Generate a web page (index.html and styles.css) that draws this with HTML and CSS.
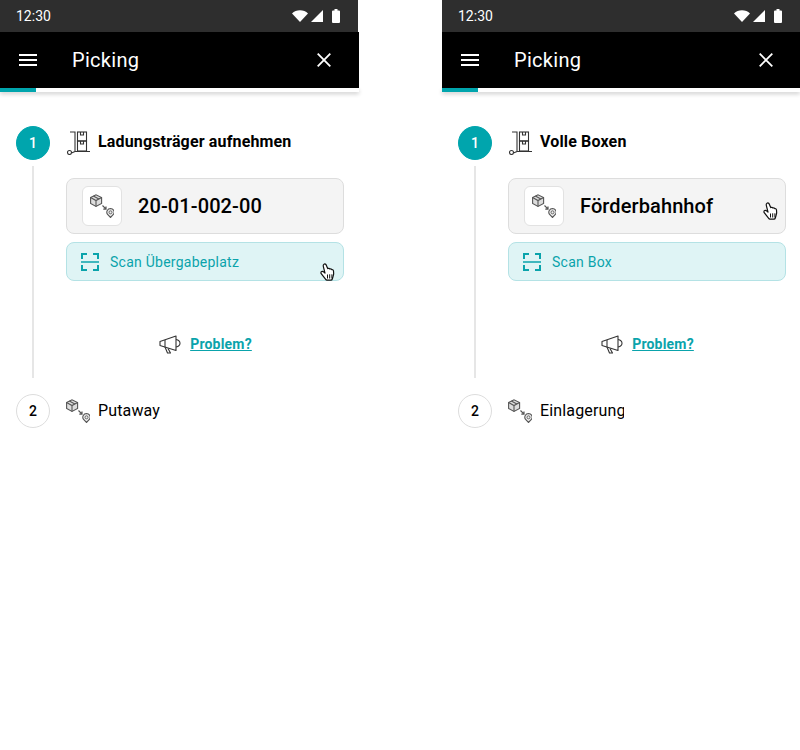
FILE: index.html
```html
<!DOCTYPE html>
<html lang="de">
<head>
    <meta charset="UTF-8">
    <meta name="viewport" content="width=device-width, initial-scale=1.0">
    <title>Picking</title>
    <link rel="stylesheet" href="styles.css">
</head>
<body>
    <svg class="sprites" width="0" height="0">
        <symbol id="i-route" viewBox="0 0 24 24">
            <g stroke="#555" stroke-width="1.100">
                <path d="M.6 3.500 6 .8 11.600 3.500V9.500L6 12.400.6 9.500Z" fill="#ddd"/>
                <path d="M.6 3.500 6 6.500 11.600 3.500M6 6.500V12.400M3.300 2.100 8.900 5" fill="none"/>
                <path d="M12.500 11.500 15.800 14.800M13.300 15.200H16V12.500" fill="none" stroke-width="1.200"/>
                <path d="M20.500 14.500a3.700 3.700 0 0 1 3.100 5.700L20.500 23.500 17.400 20.200A3.700 3.700 0 0 1 20.500 14.500Z" fill="#eee"/>
                <circle cx="20.500" cy="18.300" r="1.500" fill="none" stroke="#666" stroke-width="1"/>
            </g>
        </symbol>
        <symbol id="i-cursor" viewBox="0 0 16 20">
            <path d="M4 1.200c1-.6 1.900 0 2.300 1l1.400 3.400c.8-.5 1.600-.3 2 .4.8-.4 1.600-.2 2 .6.900-.2 1.600.3 1.800 1.200.3 1.700.2 3.800-.4 5.500l-.8 2.700c-.2.700-.7 1.100-1.400 1.100H7c-.6 0-1-.2-1.300-.7L1.200 10.700c-.5-.8-.3-1.700.4-2.100.8-.5 1.600-.2 2.300.5l1.100 1.100L3.300 3.300C3 2.400 3.300 1.600 4 1.200Z" fill="#fff" stroke="#111" stroke-width="1.200" stroke-linejoin="round"/>
            <path d="M7.500 11.500v4M9.700 11.300v4.200M11.900 11.300v4.200" stroke="#111" stroke-width="1" fill="none"/>
        </symbol>
        <symbol id="i-trolley" viewBox="0 0 24 24">
            <g fill="none" stroke="#333" stroke-width="1.100">
                <path d="M4 1H9V20.500H24M9 20.500 5.500 22"/>
                <rect x="11.500" y="1" width="9" height="9"/>
                <rect x="11.500" y="10" width="9" height="10"/>
                <path d="M14.500 1V4H17.500V1M14.500 10V13H17.500V10"/>
                <circle cx="3.500" cy="21.500" r="2"/>
            </g>
        </symbol>
        <symbol id="i-horn" viewBox="0 0 22 20">
            <g fill="none" stroke="#333" stroke-width="1.100" stroke-linejoin="round">
                <path d="M1 7.500 17 2V16.500L1 11.500Z"/>
                <path d="M6 6V13L8.500 19H11.500L9 14.500"/>
                <path d="M17 5.500C19.500 6 21 7.500 21 9.300S19.500 12.600 17 13"/>
            </g>
        </symbol>
    </svg>

    <div class="screens">
        <section class="phone">
            <div class="status-bar">
                <span>12:30</span>
                <span class="status-icons">
                    <svg width="16" height="12" viewBox="0 0 16 12"><path d="M0 3.500C4-.7 12-.7 16 3.500L8 12Z" fill="#fff"/></svg>
                    <svg width="12" height="12" viewBox="0 0 12 12"><path d="M0 12 12 0V12Z" fill="#fff"/></svg>
                    <svg class="battery" width="8" height="14" viewBox="0 0 8 14"><path d="M2.500 0H5.500V1.500H7a1 1 0 0 1 1 1V13a1 1 0 0 1-1 1H1a1 1 0 0 1-1-1V2.500a1 1 0 0 1 1-1H2.500Z" fill="#fff"/></svg>
                </span>
            </div>
            <header class="app-bar">
                <svg class="bar-icon" width="18" height="12" viewBox="0 0 18 12"><path d="M0 1H18M0 6H18M0 11H18" stroke="#fff" stroke-width="2"/></svg>
                <h1>Picking</h1>
                <svg class="close-icon" width="14" height="14" viewBox="0 0 14 14"><path d="M.7.7 13.300 13.300M13.300.7.7 13.300" stroke="#fff" stroke-width="1.800"/></svg>
            </header>
            <div class="progress"><div class="progress-fill"></div></div>

            <div class="steps">
                <div class="step-head">
                    <div class="step-num active">1</div>
                    <svg class="step-icon"><use href="#i-trolley"/></svg>
                    <strong class="step-title">Ladungsträger aufnehmen</strong>
                </div>
                <div class="step-body">
                    <div class="target">
                        <div class="target-icon"><svg width="24" height="24"><use href="#i-route"/></svg></div>
                        <span class="target-label">20-01-002-00</span>
                    </div>
                    <div class="scan">
                        <svg width="18" height="18" viewBox="0 0 18 18"><path d="M1 6V1H6M12 1H17V6M1 12V17H6M12 17H17V12" fill="none" stroke="#0aa3ab" stroke-width="2"/><path d="M0 9H18" stroke="#0aa3ab" stroke-width="1.500"/></svg>
                        <span>Scan Übergabeplatz</span>
                        <svg class="cursor cursor-scan"><use href="#i-cursor"/></svg>
                    </div>
                    <div class="problem">
                        <svg class="horn"><use href="#i-horn"/></svg>
                        <a href="#">Problem?</a>
                    </div>
                </div>
                <div class="step-head">
                    <div class="step-num">2</div>
                    <svg class="step-icon"><use href="#i-route"/></svg>
                    <span class="step-title">Putaway</span>
                </div>
            </div>
        </section>

        <section class="phone">
            <div class="status-bar">
                <span>12:30</span>
                <span class="status-icons">
                    <svg width="16" height="12" viewBox="0 0 16 12"><path d="M0 3.500C4-.7 12-.7 16 3.500L8 12Z" fill="#fff"/></svg>
                    <svg width="12" height="12" viewBox="0 0 12 12"><path d="M0 12 12 0V12Z" fill="#fff"/></svg>
                    <svg class="battery" width="8" height="14" viewBox="0 0 8 14"><path d="M2.500 0H5.500V1.500H7a1 1 0 0 1 1 1V13a1 1 0 0 1-1 1H1a1 1 0 0 1-1-1V2.500a1 1 0 0 1 1-1H2.500Z" fill="#fff"/></svg>
                </span>
            </div>
            <header class="app-bar">
                <svg class="bar-icon" width="18" height="12" viewBox="0 0 18 12"><path d="M0 1H18M0 6H18M0 11H18" stroke="#fff" stroke-width="2"/></svg>
                <h1>Picking</h1>
                <svg class="close-icon" width="14" height="14" viewBox="0 0 14 14"><path d="M.7.7 13.300 13.300M13.300.7.7 13.300" stroke="#fff" stroke-width="1.800"/></svg>
            </header>
            <div class="progress"><div class="progress-fill"></div></div>

            <div class="steps">
                <div class="step-head">
                    <div class="step-num active">1</div>
                    <svg class="step-icon"><use href="#i-trolley"/></svg>
                    <strong class="step-title">Volle Boxen</strong>
                </div>
                <div class="step-body">
                    <div class="target">
                        <div class="target-icon"><svg width="24" height="24"><use href="#i-route"/></svg></div>
                        <span class="target-label">Förderbahnhof</span>
                        <svg class="cursor cursor-target"><use href="#i-cursor"/></svg>
                    </div>
                    <div class="scan">
                        <svg width="18" height="18" viewBox="0 0 18 18"><path d="M1 6V1H6M12 1H17V6M1 12V17H6M12 17H17V12" fill="none" stroke="#0aa3ab" stroke-width="2"/><path d="M0 9H18" stroke="#0aa3ab" stroke-width="1.500"/></svg>
                        <span>Scan Box</span>
                    </div>
                    <div class="problem">
                        <svg class="horn"><use href="#i-horn"/></svg>
                        <a href="#">Problem?</a>
                    </div>
                </div>
                <div class="step-head">
                    <div class="step-num">2</div>
                    <svg class="step-icon"><use href="#i-route"/></svg>
                    <span class="step-title clipped">Einlagerung</span>
                </div>
            </div>
        </section>
    </div>
</body>
</html>
```

FILE: styles.css
```css
body {
    margin: 0;
    background-color: #fff;
    font-family: Roboto, "Liberation Sans", sans-serif;
    color: #000;
}
.sprites {
    position: absolute;
}
.screens {
    display: flex;
    justify-content: space-between;
    width: 800px;
}
.phone {
    width: 358px;
}
.phone:first-child .app-bar,
.phone:first-child .progress {
    margin-right: -1px;
}
.status-bar {
    height: 32px;
    padding: 0 16px;
    background-color: #2e2e2e;
    color: #fff;
    font-size: 14px;
    display: flex;
    align-items: center;
    justify-content: space-between;
}
.status-icons {
    display: flex;
    align-items: center;
    gap: 3px;
    padding-right: 2px;
}
.battery {
    margin-left: 6px;
}
.app-bar {
    height: 56px;
    background-color: #000;
    color: #fff;
    display: flex;
    align-items: center;
    padding: 0 27px 0 19px;
}
.phone:first-child .app-bar {
    padding-right: 28px;
}
.app-bar h1 {
    flex: 1;
    margin: 0 0 0 35px;
    font-size: 20px;
    font-weight: 400;
    letter-spacing: 0.3px;
}
.progress {
    height: 4px;
    background-color: #fff;
    box-shadow: 0 2px 4px rgba(0,0,0,0.2);
}
.progress-fill {
    width: 36px;
    height: 4px;
    background-color: #00a5ad;
}
.steps {
    padding: 34px 14px 0 16px;
}
.step-head {
    display: flex;
    align-items: center;
    height: 34px;
}
.step-num {
    box-sizing: border-box;
    width: 34px;
    height: 34px;
    border-radius: 50%;
    border: 1px solid #ddd;
    display: flex;
    align-items: center;
    justify-content: center;
    font-size: 14px;
    font-weight: 500;
}
.step-num.active {
    background-color: #00a5ad;
    border-color: #00a5ad;
    color: #fff;
}
.step-icon {
    width: 24px;
    height: 24px;
    margin: 0 8px 0 16px;
}
.step-title {
    font-size: 16px;
    font-weight: 400;
    letter-spacing: 0.15px;
    padding-bottom: 2px;
}
strong.step-title {
    font-weight: 700;
    padding-bottom: 3px;
}
.clipped {
    width: 84px;
    overflow: hidden;
    white-space: nowrap;
}
.step-body {
    margin: 6px 0 16px 16px;
    padding: 12px 0 0 32px;
    border-left: 2px solid #e6e6e6;
    height: 200px;
}
.target {
    position: relative;
    box-sizing: border-box;
    height: 56px;
    padding: 0 15px;
    display: flex;
    align-items: center;
    gap: 16px;
    background-color: #f4f4f4;
    border: 1px solid #ddd;
    border-radius: 8px;
}
.target-icon {
    box-sizing: border-box;
    width: 40px;
    height: 40px;
    background-color: #fff;
    border: 1px solid #e2e2e2;
    border-radius: 6px;
    display: flex;
    align-items: center;
    justify-content: center;
}
.target-label {
    font-size: 20px;
    font-weight: 500;
    letter-spacing: 0.1px;
}
.scan {
    position: relative;
    box-sizing: border-box;
    height: 39px;
    margin-top: 8px;
    padding: 0 14px;
    display: flex;
    align-items: center;
    gap: 11px;
    background-color: #dff4f5;
    border: 1px solid #b4e2e5;
    border-radius: 8px;
    color: #0aa3ab;
    font-size: 14px;
    letter-spacing: 0.25px;
}
.cursor {
    position: absolute;
    width: 16px;
    height: 20px;
}
.cursor-scan {
    right: 7px;
    top: 20px;
}
.cursor-target {
    right: 6px;
    top: 23px;
}
.problem {
    margin-top: 53px;
    display: flex;
    align-items: center;
    justify-content: center;
    gap: 9px;
}
.horn {
    width: 22px;
    height: 20px;
    margin-left: 1px;
}
.problem a {
    color: #0aa3ab;
    font-size: 14px;
    font-weight: 700;
    letter-spacing: 0.2px;
}
```
